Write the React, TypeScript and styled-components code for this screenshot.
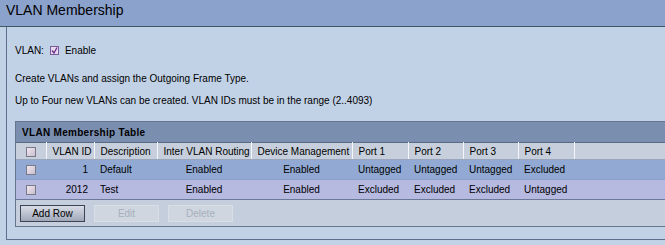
import styled, { createGlobalStyle } from 'styled-components';

const GlobalStyle = createGlobalStyle`
    html, body {
        margin: 0;
        padding: 0;
        background: #c2d2e6;
        font-family: "Liberation Sans", Arial, sans-serif;
        font-size: 10px;
        color: #000;
        overflow: hidden;
    }
`

type VlanRow = {
    id: number
    description: string
    routing: string
    management: string
    ports: string[]
}

const vlans: VlanRow[] = [
    { id: 1, description: 'Default', routing: 'Enabled', management: 'Enabled', ports: ['Untagged', 'Untagged', 'Untagged', 'Excluded'] },
    { id: 2012, description: 'Test', routing: 'Enabled', management: 'Enabled', ports: ['Excluded', 'Excluded', 'Excluded', 'Untagged'] },
]

const columns = [
    { title: '', width: 30 },
    { title: 'VLAN ID', width: 48 },
    { title: 'Description', width: 63 },
    { title: 'Inter VLAN Routing', width: 94 },
    { title: 'Device Management', width: 101 },
    { title: 'Port 1', width: 56 },
    { title: 'Port 2', width: 55 },
    { title: 'Port 3', width: 55 },
    { title: 'Port 4', width: 56 },
]

const App = () => {
    return (
        <>
            <GlobalStyle />
            <Page>
                <TitleBar>
                    <h1>VLAN Membership</h1>
                </TitleBar>
                <Content>
                    <EnableLine>
                        <span>VLAN:</span>
                        <CheckBox $checked>
                            <svg width="7" height="7" viewBox="0 0 7 7">
                                <path d="M1 3.5 L3 6 L6 0.5" fill="none" stroke="#6a2a8a" strokeWidth="1.3" />
                            </svg>
                        </CheckBox>
                        <span>Enable</span>
                    </EnableLine>
                    <Note>Create VLANs and assign the Outgoing Frame Type.</Note>
                    <Note>Up to Four new VLANs can be created. VLAN IDs must be in the range (2..4093)</Note>

                    <TablePanel>
                        <TableTitle>VLAN Membership Table</TableTitle>
                        <Table>
                            <colgroup>
                                {columns.map((c, i) => <col key={i} style={{ width: c.width }} />)}
                                <col />
                            </colgroup>
                            <thead>
                                <tr>
                                    {columns.map((c, i) =>
                                        <Th key={i}>{i === 0 ? <RowCheck /> : c.title}</Th>
                                    )}
                                    <Th $last />
                                </tr>
                            </thead>
                            <tbody>
                                {vlans.map((v, idx) =>
                                    <Tr key={v.id} $odd={idx % 2 === 1}>
                                        <Td $align="center"><RowCheck /></Td>
                                        <Td $align="right">{v.id}</Td>
                                        <Td>{v.description}</Td>
                                        <Td $align="center">{v.routing}</Td>
                                        <Td $align="center">{v.management}</Td>
                                        {v.ports.map((p, i) => <Td key={i}>{p}</Td>)}
                                        <Td />
                                    </Tr>
                                )}
                            </tbody>
                        </Table>
                        <ButtonBar>
                            <Button>Add Row</Button>
                            <Button disabled>Edit</Button>
                            <Button disabled>Delete</Button>
                        </ButtonBar>
                    </TablePanel>
                </Content>
            </Page>
        </>
    );
};

export default App;

const Page = styled.div`
    width: 665px;
    height: 245px;
    display: flex;
    flex-direction: column;
`

const TitleBar = styled.div`
    height: 26px;
    flex-shrink: 0;
    background: #8ba2cc;
    border-bottom: 1px solid #3f5a63;
    padding-left: 6px;

    h1 {
        margin: 0;
        padding-top: 2px;
        font-size: 14px;
        line-height: 17px;
        font-weight: normal;
    }
`

const Content = styled.div`
    margin-left: 6px;
    height: 213px;
    flex-shrink: 0;
    box-sizing: border-box;
    border-left: 1px solid #5d6e8e;
    border-bottom: 1px solid #5d6e8e;
    padding: 16px 0 0 8px;
    display: flex;
    flex-direction: column;
`

const EnableLine = styled.div`
    display: flex;
    align-items: center;
    gap: 6px;
    height: 14px;
`

const CheckBox = styled.span<{ $checked?: boolean }>`
    width: 7px;
    height: 7px;
    border: 1px solid #7a5a9a;
    background: #e6dcee;
    display: flex;
    align-items: center;
    justify-content: center;
`

const Note = styled.div`
    margin-top: 15px;
    height: 14px;
    line-height: 14px;

    & + & {
        margin-top: 8px;
    }
`

const TablePanel = styled.div`
    margin-top: 13px;
    border-left: 1px solid #66768f;
    border-bottom: 1px solid #66768f;
    background: #c6d0dc;
`

const TableTitle = styled.div`
    height: 20px;
    background: #7a8eb0;
    border-top: 1px solid #66768f;
    font-weight: bold;
    letter-spacing: 0.3px;
    padding-left: 6px;
    display: flex;
    align-items: center;
`

const Table = styled.table`
    border-collapse: collapse;
    table-layout: fixed;
    width: 100%;
`

const Th = styled.th<{ $last?: boolean }>`
    height: 16px;
    padding: 0 0 0 6px;
    text-align: left;
    font-weight: normal;
    background: #c6cfdb;
    border-top: 1px solid #5a6a84;
    border-right: ${p => p.$last ? 'none' : '1px solid #f4f6fa'};
    border-bottom: 1px solid #9aa6bc;
    white-space: nowrap;
    overflow: hidden;

    &:first-child {
        padding: 0;
        text-align: center;
    }
`

const Tr = styled.tr<{ $odd?: boolean }>`
    background: ${p => p.$odd ? '#b6b9e0' : '#92aad3'};
    border-bottom: 1px solid ${p => p.$odd ? '#6c7898' : '#8aa0c8'};
`

const Td = styled.td<{ $align?: string }>`
    height: 19px;
    padding: 0 6px;
    text-align: ${p => p.$align || 'left'};
    white-space: nowrap;

    &:first-child {
        padding: 0;
    }
`

const RowCheck = styled.span`
    display: inline-block;
    vertical-align: middle;
    width: 8px;
    height: 8px;
    border: 1px solid #7a7a8a;
    background: linear-gradient(135deg, #f2e6ee, #c8bfd0);
`

const ButtonBar = styled.div`
    height: 26px;
    display: flex;
    align-items: center;
    gap: 9px;
    padding-left: 4px;
    background: #c4cedc;
`

const Button = styled.button`
    width: 65px;
    height: 17px;
    padding: 0;
    font-family: "Liberation Sans", Arial, sans-serif;
    font-size: 10px;
    color: #000;
    border: 1px solid #3c4454;
    background: linear-gradient(#d8dce6, #a0a8b8);

    &:disabled {
        color: #a8b0bc;
        border: 1px solid #d8dde6;
        background: #cfd6e0;
    }
`
